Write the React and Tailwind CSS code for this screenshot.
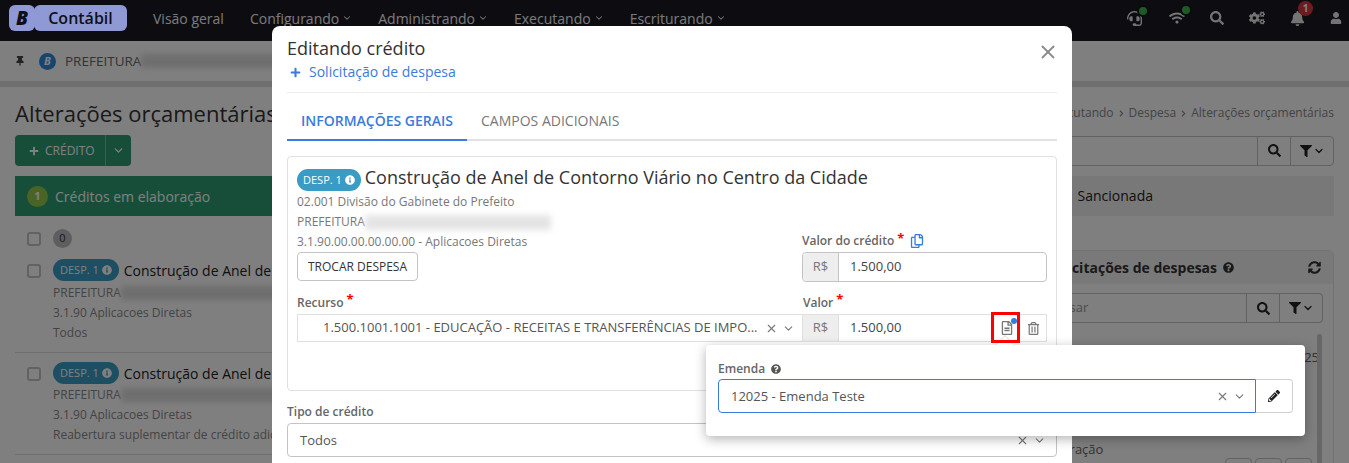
import React from "react";
import {
  FaThumbtack, FaHeadset, FaWifi, FaSearch, FaCogs, FaBell, FaUser, FaFilter, FaSyncAlt,
  FaQuestionCircle, FaPencilAlt, FaPlus, FaInfoCircle, FaRegTrashAlt, FaRegCopy, FaRegFileAlt, FaChevronRight,
} from "react-icons/fa";
import { ChevronDown, X } from "lucide-react";

const FONT = "font-['Open_Sans','Noto_Sans',sans-serif]";

function NavItem({ label, chevron = true }) {
  return (
    <div className="flex items-center gap-[3px] text-[14px] text-[#f4f4f4]">
      <span>{label}</span>
      {chevron && <ChevronDown size={10} strokeWidth={2.5} />}
    </div>
  );
}

function Dot() {
  return <span className="absolute -right-[5px] -top-[4px] h-[8px] w-[8px] rounded-full bg-[#3bb54a] ring-2 ring-[#151620]" />;
}

function Nav() {
  return (
    <div className="flex h-[41px] items-center bg-[#181922] pb-[5px] pl-[9px] pr-[7px]">
      <div className="relative z-[1] flex h-[26px] items-center">
        <div className="flex h-[26px] w-[26px] items-center justify-center rounded-[6px] bg-[#8f99d6] text-[19px] font-extrabold italic text-[#101018]">B</div>
        <div className="-ml-[1px] flex h-[26px] w-[93px] items-center justify-center rounded-[6px] bg-[#8f99d6] text-[16px] font-semibold text-[#101018]">Contábil</div>
      </div>
      <div className="ml-[26px] flex items-center gap-[26px]">
        <NavItem label="Visão geral" chevron={false} />
        <NavItem label="Configurando" />
        <NavItem label="Administrando" />
        <NavItem label="Executando" />
        <NavItem label="Escriturando" />
      </div>
      <div className="ml-auto flex items-center gap-[25px] text-[#e8e8e8]">
        <span className="relative -ml-[2px] mr-[2px]"><FaHeadset size={15} /><Dot /></span>
        <span className="relative"><FaWifi size={16} /><Dot /></span>
        <FaSearch size={14} />
        <FaCogs size={16} />
        <span className="relative">
          <FaBell size={15} />
          <span className="absolute -right-[8px] -top-[10px] flex h-[15px] w-[15px] items-center justify-center rounded-full bg-[#d9363e] text-[10px] font-bold text-white">1</span>
        </span>
        <FaUser size={12} />
      </div>
    </div>
  );
}

function SearchBox({ placeholder, className = "" }) {
  return (
    <div className={`flex h-[30px] rounded-[4px] border border-[#c4c4c4] bg-white text-[13px] ${className}`}>
      <div className="flex flex-1 items-center px-3 text-[#999]">{placeholder}</div>
      <div className="flex w-[33px] items-center justify-center border-l border-[#c4c4c4] text-[#222]"><FaSearch size={13} /></div>
      <div className="flex w-[43px] items-center justify-center gap-[1px] border-l border-[#c4c4c4] text-[#222]">
        <FaFilter size={12} /><ChevronDown size={12} strokeWidth={2.5} />
      </div>
    </div>
  );
}

function DespBadge({ className = "px-[6px]" }) {
  return (
    <span className={`inline-flex h-[22px] shrink-0 items-center gap-[3px] rounded-full bg-[#3a9cc4] text-[11px] text-white ${className}`}>
      DESP. 1 <FaInfoCircle size={10} />
    </span>
  );
}

function ListItem({ last, lineGap }) {
  return (
    <div className="flex gap-3 border-b border-[#dcdcdc] px-3 pb-[9px] pt-[9px]">
      <div className="mt-[5px] h-[14px] w-[14px] shrink-0 rounded-[3px] border-2 border-[#c4c4c4]" />
      <div className="min-w-0 flex-1">
        <div className="flex items-center gap-[5px] whitespace-nowrap text-[14px] text-[#222]">
          <DespBadge className="px-[7px]" /> <span>Construção de Anel de Contorno Viário no Centro da Cidade</span>
        </div>
        <div className={`flex items-center text-[12px] leading-[20px] text-[#888] ${lineGap}`}>PREFEITURA <div className="h-[14px] w-[170px] bg-[#dcdcdc] blur-[3px]" /></div>
        <div className="text-[12px] leading-[20px] text-[#888]">3.1.90 Aplicacoes Diretas</div>
        <div className="whitespace-nowrap text-[12px] leading-[20px] text-[#888]">{last}</div>
      </div>
    </div>
  );
}

function Page() {
  return (
    <div className="h-[463px] overflow-hidden bg-white">
      <Nav />
      <div className="box-content flex h-[40px] items-center gap-[14px] border-b-[6px] border-[#dedede] px-[15px] text-[13.5px] text-[#666]">
        <FaThumbtack size={10} className="text-[#444]" />
        <span className="flex h-[17px] w-[17px] items-center justify-center rounded-full bg-[#2f8ae0] text-[11px] font-bold italic text-white">B</span>
        <div className="-ml-[5px] flex items-center">PREFEITURA <div className="h-[14px] w-[140px] bg-[#dcdcdc] blur-[3px]" /></div>
      </div>
      <div className="px-[15px]">
        <div className="flex h-[48px] items-center justify-between pt-[4px]">
          <div className="text-[22px] text-[#333]">Alterações orçamentárias</div>
          <div className="flex items-center gap-[4px] text-[12px] text-[#888]">
            Executando <FaChevronRight size={7} /> Despesa <FaChevronRight size={7} /> Alterações orçamentárias
          </div>
        </div>
        <div className="flex items-center justify-between">
          <div className="flex h-[31px] w-[116px] rounded-[4px] bg-[#2f9d72] text-white">
            <div className="flex flex-1 items-center gap-[6px] border-r border-[#6fc19f] pl-[14px] text-[12px]"><FaPlus size={10} /> CRÉDITO</div>
            <div className="flex w-[25px] items-center justify-center"><ChevronDown size={13} strokeWidth={2.5} /></div>
          </div>
          <SearchBox className="w-[500px]" />
        </div>
        <div className="mt-[10px] flex h-[40px] text-[14px]">
          <div className="flex w-[640px] items-center gap-[7px] bg-[#2f9d72] pl-[12px] text-white">
            <span className="flex h-[21px] w-[21px] items-center justify-center rounded-full bg-[#93c94b] text-[11px] font-bold">1</span>
            Créditos em elaboração
          </div>
          <div className="flex flex-1 items-center justify-end bg-[#f0f0f0] pb-[1px] pr-[181px] text-[#222]">Sancionada</div>
        </div>
        <div className="flex justify-between">
          <div className="w-[300px]">
            <div className="flex items-center gap-3 px-3 pb-[2px] pt-[13px]">
              <div className="h-[14px] w-[14px] rounded-[3px] border-2 border-[#c4c4c4]" />
              <span className="flex h-[19px] w-[19px] items-center justify-center rounded-full bg-[#bdbdbd] text-[11px] text-[#333]">0</span>
            </div>
            <ListItem last="Todos" lineGap="mt-[2px]" />
            <ListItem last="Reabertura suplementar de crédito adicional" lineGap="mt-[1px]" />
          </div>
          <div className="mt-[34px] h-[240px] w-[329px] shrink-0 rounded-[5px] border border-[#e4e4e4]">
            <div className="flex h-[33px] items-center justify-between bg-[#f2f2f2] pl-[41px] pr-[12px] text-[14px] font-bold text-[#333]">
              <span className="flex items-center gap-[6px]">Solicitações de despesas <FaQuestionCircle size={11} /></span>
              <FaSyncAlt size={13} />
            </div>
            <div className="flex pl-[10px] pr-[10px] pt-[9px]"><SearchBox placeholder="Pesquisar" className="flex-1" /></div>
            <div className="mt-[11px] flex pl-[10px] pr-[11px]">
              <div className="flex-1 pt-[14px] text-[13px] leading-[18px] text-[#666]">
                <div className="-mr-[2px] text-right">2025</div>
                <div className="mt-[74px]">Administração</div>
                <div className="flex justify-end gap-[3px] pr-[5px]">
                  <div className="h-[24px] w-[27px] rounded-[4px] border border-[#c4c4c4]" />
                  <div className="h-[24px] w-[27px] rounded-[4px] border border-[#c4c4c4]" />
                  <div className="h-[24px] w-[27px] rounded-[4px] border border-[#c4c4c4]" />
                </div>
              </div>
              <div className="h-[130px] w-[5px] rounded bg-[#cfcfcf]" />
            </div>
          </div>
        </div>
      </div>
    </div>
  );
}

function Field({ children, className = "" }) {
  return <div className={`text-[12px] font-semibold leading-[18px] text-[#666] ${className}`}>{children}</div>;
}

function Req() {
  return <span className="relative -top-[3px] ml-[3px] text-[13px] font-bold text-[#f00]">*</span>;
}

function SelectIcons() {
  return (
    <div className="flex items-center gap-[4px] text-[#777]">
      <X size={13} /><ChevronDown size={13} />
    </div>
  );
}

function Popover() {
  return (
    <div className="absolute left-[434px] top-[319px] h-[91px] w-[599px] rounded-[4px] bg-white px-[12px] pt-[15px] shadow-[0_3px_12px_rgba(0,0,0,0.3)]">
      <div className="absolute -top-[7px] left-[292px] h-[14px] w-[14px] rotate-45 border-l border-t border-[#e4e4e4] bg-white" />
      <Field className="flex items-center gap-[6px]">Emenda <FaQuestionCircle size={10} className="text-[#555]" /></Field>
      <div className="mt-[1px] flex h-[34px]">
        <div className="flex flex-1 items-center justify-between rounded-l-[4px] border border-[#3a7bdc] pl-[12px] pr-[9px] pt-[1px] text-[13px] text-[#555]">
          12025 - Emenda Teste <SelectIcons />
        </div>
        <div className="flex w-[37px] items-center justify-center rounded-r-[4px] border border-l-0 border-[#d0d0d0] text-[#222]"><FaPencilAlt size={12} /></div>
      </div>
    </div>
  );
}

function Modal() {
  return (
    <div className="absolute left-[272px] top-[26px] z-[2] h-[500px] w-[800px] rounded-[8px] bg-white px-[15px]">
      <div className="relative h-[67px] border-b border-[#eeeeee] pt-[10px]">
        <div className="text-[18px] leading-[24px] text-[#333]">Editando crédito</div>
        <div className="mt-[1px] flex items-center gap-[8px] pl-[3px] text-[14px] leading-[22px] text-[#3a7bdc]"><FaPlus size={11} /> Solicitação de despesa</div>
        <X size={22} strokeWidth={2} className="absolute right-[-2px] top-[15px] text-[#8a8a8a]" />
      </div>
      <div className="flex h-[48px] border-b-2 border-[#e2e2e2] text-[14px]">
        <div className="-mb-[2px] flex w-[180px] items-center justify-center border-b-2 border-[#3a7bdc] pt-[8px] font-semibold text-[#3a7bdc]">INFORMAÇÕES GERAIS</div>
        <div className="flex items-center pl-[14px] pt-[8px] text-[#777]">CAMPOS ADICIONAIS</div>
      </div>
      <div className="mt-[15px] h-[235px] rounded-[4px] border border-[#e0e0e0] px-[9px] pt-[12px]">
        <div className="flex items-start gap-[4px]">
          <DespBadge />
          <span className="-mt-[3px] text-[18px] leading-[22px] text-[#333]">Construção de Anel de Contorno Viário no Centro da Cidade</span>
        </div>
        <div className="mt-[1px] flex h-[90px]">
          <div className="w-[505px] text-[12px] leading-[20px] text-[#777]">
            <div>02.001 Divisão do Gabinete do Prefeito</div>
            <div className="flex items-center">PREFEITURA <div className="h-[15px] w-[186px] bg-[#e4e4e4] blur-[3px]" /></div>
            <div>3.1.90.00.00.00.00.00 - Aplicacoes Diretas</div>
            <div className="flex h-[29px] w-[121px] items-center justify-center rounded-[4px] border border-[#c4c4c4] text-[12px] text-[#333]">TROCAR DESPESA</div>
          </div>
          <div className="flex w-[245px] flex-col justify-end">
            <Field className="flex items-start">Valor do crédito<Req /> <FaRegCopy size={14} className="ml-[6px] mt-[2px] text-[#3a7bdc]" /></Field>
            <div className="mt-[2px] flex h-[30px] rounded-[4px] border border-[#c4c4c4] text-[13px]">
              <div className="flex w-[36px] items-center justify-center rounded-l-[4px] border-r border-[#c4c4c4] bg-[#eeeeee] text-[#777]">R$</div>
              <div className="flex items-center pl-[11px] text-[#444]">1.500,00</div>
            </div>
          </div>
        </div>
        <div className="mt-[11px] flex">
          <div className="w-[506px]">
            <Field>Recurso<Req /></Field>
            <div className="mt-[2px] flex h-[28px] items-center justify-between border border-[#e0e0e0] pl-[25px] pr-[7px] text-[13px] text-[#555]">
              1.500.1001.1001 - EDUCAÇÃO - RECEITAS E TRANSFERÊNCIAS DE IMPO... <SelectIcons />
            </div>
          </div>
          <div className="w-[244px]">
            <Field>Valor<Req /></Field>
            <div className="mt-[2px] flex h-[28px] border border-l-0 border-[#e0e0e0] text-[13px]">
              <div className="flex w-[36px] items-center justify-center border-r border-[#e0e0e0] bg-[#eeeeee] pb-[1px] text-[#777]">R$</div>
              <div className="flex flex-1 items-center pb-[1px] pl-[11px] text-[#444]">1.500,00</div>
              <div className="relative z-10 -mt-[3px] flex h-[31px] w-[29px] items-center justify-center border-[3px] border-[#f00] pl-[3px] text-[#777]">
                <FaRegFileAlt size={14} />
                <span className="absolute right-0 top-[3px] h-[6px] w-[6px] rounded-full bg-[#2f7fe0]" />
              </div>
              <div className="flex w-[26px] items-center justify-center text-[#777]"><FaRegTrashAlt size={13} /></div>
            </div>
          </div>
        </div>
      </div>
      <Field className="mt-[12px]">Tipo de crédito</Field>
      <div className="mt-[2px] flex h-[34px] items-center justify-between rounded-[4px] border border-[#c4c4c4] pl-[12px] pr-[10px] pt-[1px] text-[13px] text-[#555]">
        Todos <SelectIcons />
      </div>
      <Popover />
    </div>
  );
}

export default function App() {
  return (
    <div className={`relative h-[463px] w-full overflow-hidden ${FONT}`}>
      <Page />
      <div className="absolute inset-0 bg-black/50" />
      <Modal />
    </div>
  );
}
